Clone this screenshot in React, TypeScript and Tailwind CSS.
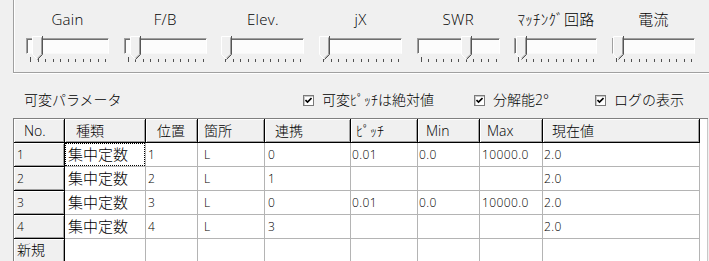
import React from "react";

const sliders = [
  { label: "Gain", pos: 6 },
  { label: "F/B", pos: 6 },
  { label: "Elev.", pos: 0 },
  { label: "jX", pos: 0 },
  { label: "SWR", pos: 44 },
  { label: "ﾏｯﾁﾝｸﾞ回路", pos: 2 },
  { label: "電流", pos: 1 },
];

const heads = ["No.", "種類", "位置", "箇所", "連携", "ﾋﾟｯﾁ", "Min", "Max", "現在値"];
const headPad = ["pl-[10px]", "pl-[11px]", "pl-[11px]", "pl-[6px]", "pl-[10px]", "pl-[5px]", "pl-[8px]", "pl-[7px]", "pl-[9px]"];
const cellPad = ["pl-[3px]", "pl-[2px]", "pl-[1px]", "pl-[5px]", "pl-[2px]", "pl-[0px]", "pl-[0px]", "pl-[1px]", "pl-[0px]"];

const rows = [
  ["1", "集中定数", "1", "L", "0", "0.01", "0.0", "10000.0", "2.0"],
  ["2", "集中定数", "2", "L", "1", "", "", "", "2.0"],
  ["3", "集中定数", "3", "L", "0", "0.01", "0.0", "10000.0", "2.0"],
  ["4", "集中定数", "4", "L", "3", "", "", "", "2.0"],
  ["新規", "", "", "", "", "", "", "", ""],
];

function Thumb({ pos }: { pos: number }) {
  return (
    <svg className="absolute top-0" style={{ left: pos }} width="12" height="25" viewBox="0 0 12 25">
      <polygon points="0,0 11,0 11,18 5.5,23.5 0,18" fill="#f0f0f0" />
      <polyline points="0.5,18.5 0.5,0.5 10.5,0.5" fill="none" stroke="#ffffff" />
      <polyline points="0.5,18.5 5.5,23.5" fill="none" stroke="#ffffff" />
      <polyline points="9.5,1.5 9.5,18.2 5.5,22.2" fill="none" stroke="#a0a0a0" />
      <polyline points="10.5,0 10.5,18.5 5.5,23.5" fill="none" stroke="#555555" />
    </svg>
  );
}

function Slider({ label, pos }: { label: string; pos: number }) {
  return (
    <div className="flex w-[83px] flex-col">
      <div className="mt-[9px] h-[20px] whitespace-nowrap text-center text-[15px] leading-[20px] tracking-[0.3px]">{label}</div>
      <div className="relative mt-[7px] h-[28px]">
        <div className="mt-[2px] h-[16px] border border-t-[#a0a0a0] border-l-[#a0a0a0] border-r-white border-b-[#f8f8f8] bg-[#fcfcfc] shadow-[inset_1px_1px_0_#6e6e6e]" />
        <div className="mt-[1px] flex h-[8px] items-end justify-between pl-[4px] pr-[3px] pb-[1px]">
          {Array.from({ length: 11 }).map((_, i) => (
            <div key={i} className={i === 0 ? "h-[5px] w-px bg-[#505050]" : "h-[3px] w-px bg-[#505050]"} />
          ))}
        </div>
        <Thumb pos={pos} />
      </div>
    </div>
  );
}

function Check({ label, w }: { label: string; w: string }) {
  return (
    <div className={"flex items-center gap-[8px] " + w}>
      <div className="flex h-[11px] w-[11px] items-center justify-center border border-[#7a7a7a] bg-white shadow-[inset_1px_1px_0_#c8c8c8]">
        <svg width="7" height="7" viewBox="0 0 7 7">
          <polyline points="0.5,3 2.5,5 6.5,1" fill="none" stroke="#000" strokeWidth="1.6" />
        </svg>
      </div>
      <span className="whitespace-nowrap text-[14px] leading-[20px]">{label}</span>
    </div>
  );
}

export default function App() {
  return (
    <div className="h-[261px] w-[709px] overflow-hidden bg-[#f0f0f0] font-[family-name:'Open_Sans','Noto_Sans_CJK_JP',sans-serif] font-light text-black">
      <div className="ml-[13px] h-[73px] w-[720px] border-b border-l border-[#a0a0a0] shadow-[inset_1px_0_0_#fff,0_1px_0_#fff]">
        <div className="flex gap-[14.7px] pl-[12px]">
          {sliders.map((s) => (
            <Slider key={s.label} label={s.label} pos={s.pos} />
          ))}
        </div>
      </div>

      <div className="mt-[17px] flex h-[20px] items-center">
        <div className="w-[303px] pl-[24px] text-[14px] leading-[20px]">可変パラメータ</div>
        <Check label="可変ﾋﾟｯﾁは絶対値" w="w-[171px]" />
        <Check label="分解能2°" w="w-[121px]" />
        <Check label="ログの表示" w="w-[100px]" />
      </div>

      <div className="ml-[13px] mt-[8px] flex w-[695px] border-l border-t border-[#808080] bg-white">
        <div className="grid grid-cols-[51px_81px_52px_67px_86px_67px_62px_63px_157px]">
          {heads.map((h, i) => (
            <div
              key={h}
              className={
                "h-[24px] border-b border-r border-black bg-[#f0f0f0] text-[14px] leading-[23px] shadow-[inset_1px_1px_0_#fff,inset_-1px_-1px_0_#a0a0a0] " +
                headPad[i]
              }
            >
              {h}
            </div>
          ))}
          {rows.map((r, ri) =>
            r.map((c, ci) =>
              ci === 0 ? (
                <div
                  key={ri + "-" + ci}
                  className={
                    "h-[24px] border-b border-r border-black bg-[#f0f0f0] pl-[3px] shadow-[inset_1px_1px_0_#fff,inset_-1px_-1px_0_#a0a0a0] " +
                    (c === "新規" ? "text-[14px] leading-[22px]" : "text-[12px] leading-[23px] tracking-[0.3px]")
                  }
                >
                  {c}
                </div>
              ) : (
                <div key={ri + "-" + ci} className="h-[24px] border-b border-r border-[#b4b4b4]">
                  <div
                    className={
                      "h-full " +
                      cellPad[ci] +
                      (ci === 1 ? " text-[15px] leading-[21px]" : " text-[12px] leading-[21px] tracking-[0.4px]") +
                      (ri === 0 && ci === 1 ? " border border-dotted border-black" : " border border-transparent")
                    }
                  >
                    {c}
                  </div>
                </div>
              )
            )
          )}
        </div>
        <div className="w-[8px] self-stretch border-r border-[#c8c8c8]" />
      </div>
    </div>
  );
}
